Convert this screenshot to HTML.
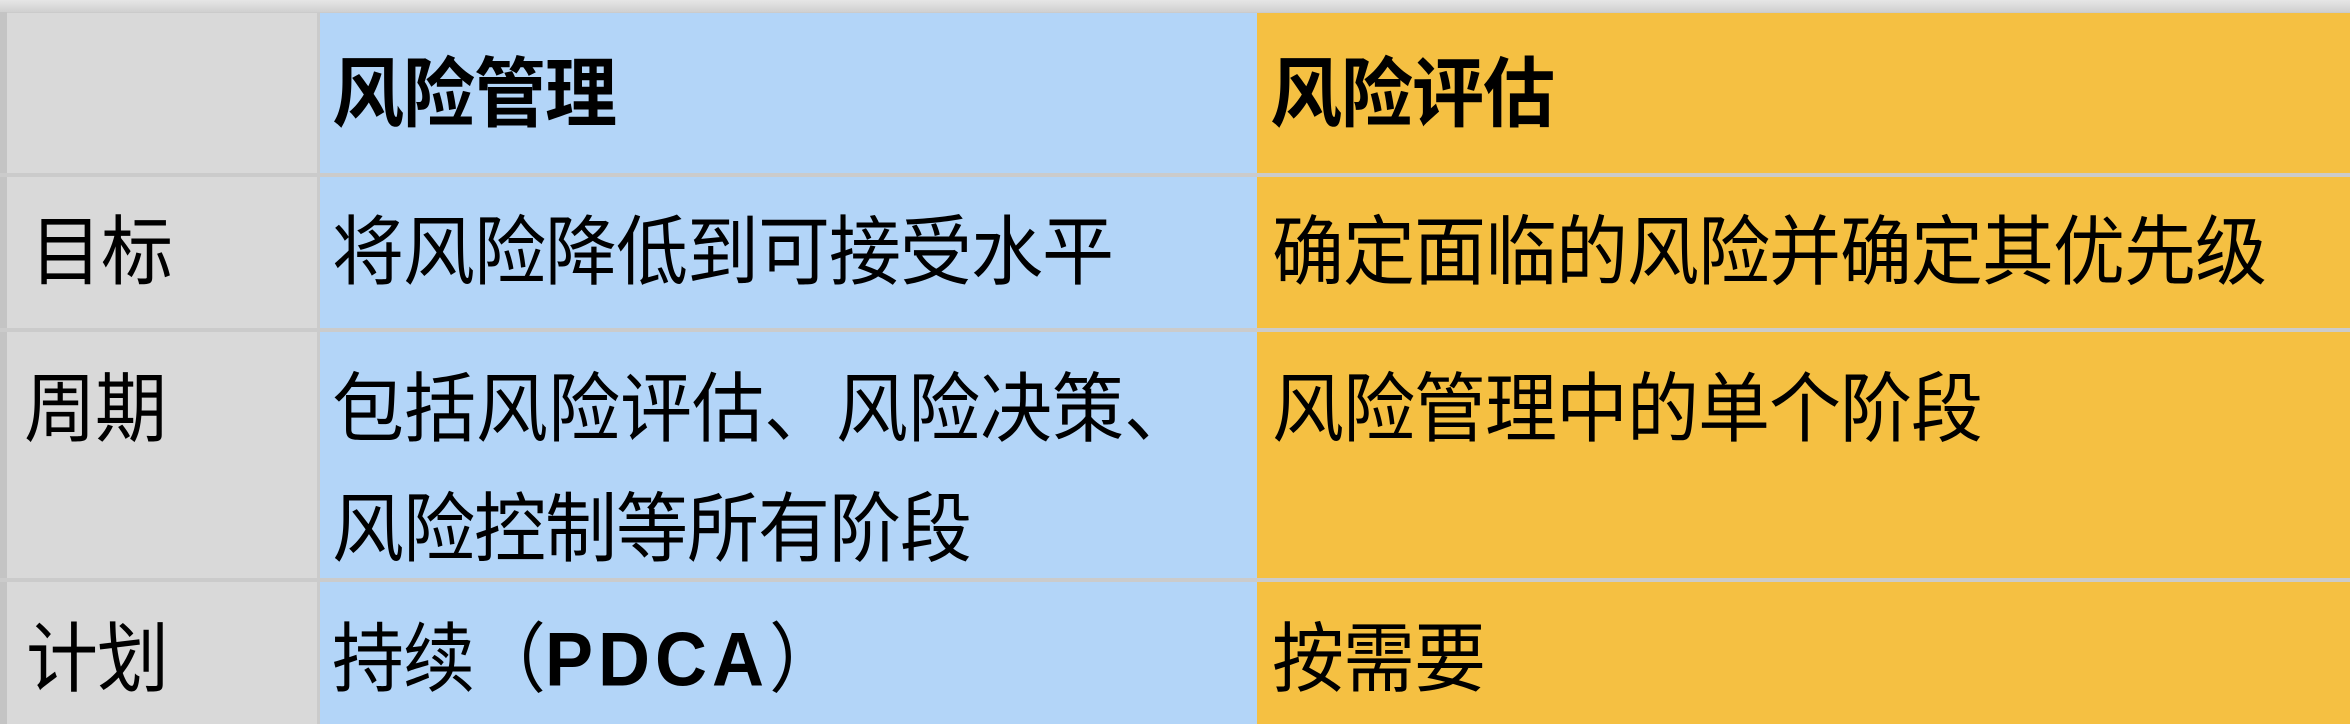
<!DOCTYPE html>
<html><head><meta charset="utf-8"><style>
html,body{margin:0;padding:0}
body{width:2350px;height:724px;position:relative;overflow:hidden;background:#cbcbcb;font-family:"Liberation Sans","Noto Sans CJK SC",sans-serif;color:#000}
.r{position:absolute}
.t{position:absolute;font-size:72px;line-height:72px;letter-spacing:-1px;white-space:nowrap;transform:scaleY(1.06);transform-origin:0 50%}
.h{font-weight:bold;letter-spacing:-1px}
b{font-family:"Liberation Sans",sans-serif;font-weight:bold;letter-spacing:5px}
</style></head><body>
<div class="r" style="left:0;top:0;width:2350px;height:12px;background:linear-gradient(#e6e6e6,#d0d0d0)"></div>
<div class="r" style="left:0;top:12px;width:7px;height:712px;background:#c4c4c4"></div>
<div class="r" style="left:7px;top:13px;width:310px;height:711px;background:#d9d9d9"></div>
<div class="r" style="left:320px;top:13px;width:937px;height:711px;background:#b3d5f8"></div>
<div class="r" style="left:1257px;top:13px;width:1093px;height:711px;background:#f5c042"></div>
<div class="r" style="left:0;top:173px;width:2350px;height:4px;background:#cbcbcb"></div>
<div class="r" style="left:0;top:328px;width:2350px;height:4px;background:#cbcbcb"></div>
<div class="r" style="left:0;top:578px;width:2350px;height:4px;background:#cbcbcb"></div>

<div class="t h" style="left:332px;top:59px">风险管理</div>
<div class="t h" style="left:1270px;top:59px">风险评估</div>

<div class="t" style="left:30px;top:217px">目标</div>
<div class="t" style="left:332px;top:217px">将风险降低到可接受水平</div>
<div class="t" style="left:1272px;top:217px">确定面临的风险并确定其优先级</div>

<div class="t" style="left:24px;top:374px">周期</div>
<div class="t" style="left:332px;top:374px;letter-spacing:0">包括风险评估、风险决策、</div>
<div class="t" style="left:332px;top:494px">风险控制等所有阶段</div>
<div class="t" style="left:1272px;top:374px">风险管理中的单个阶段</div>

<div class="t" style="left:26px;top:624px">计划</div>
<div class="t" style="left:332px;top:624px">持续（<b>PDCA</b>）</div>
<div class="t" style="left:1272px;top:624px">按需要</div>
</body></html>
